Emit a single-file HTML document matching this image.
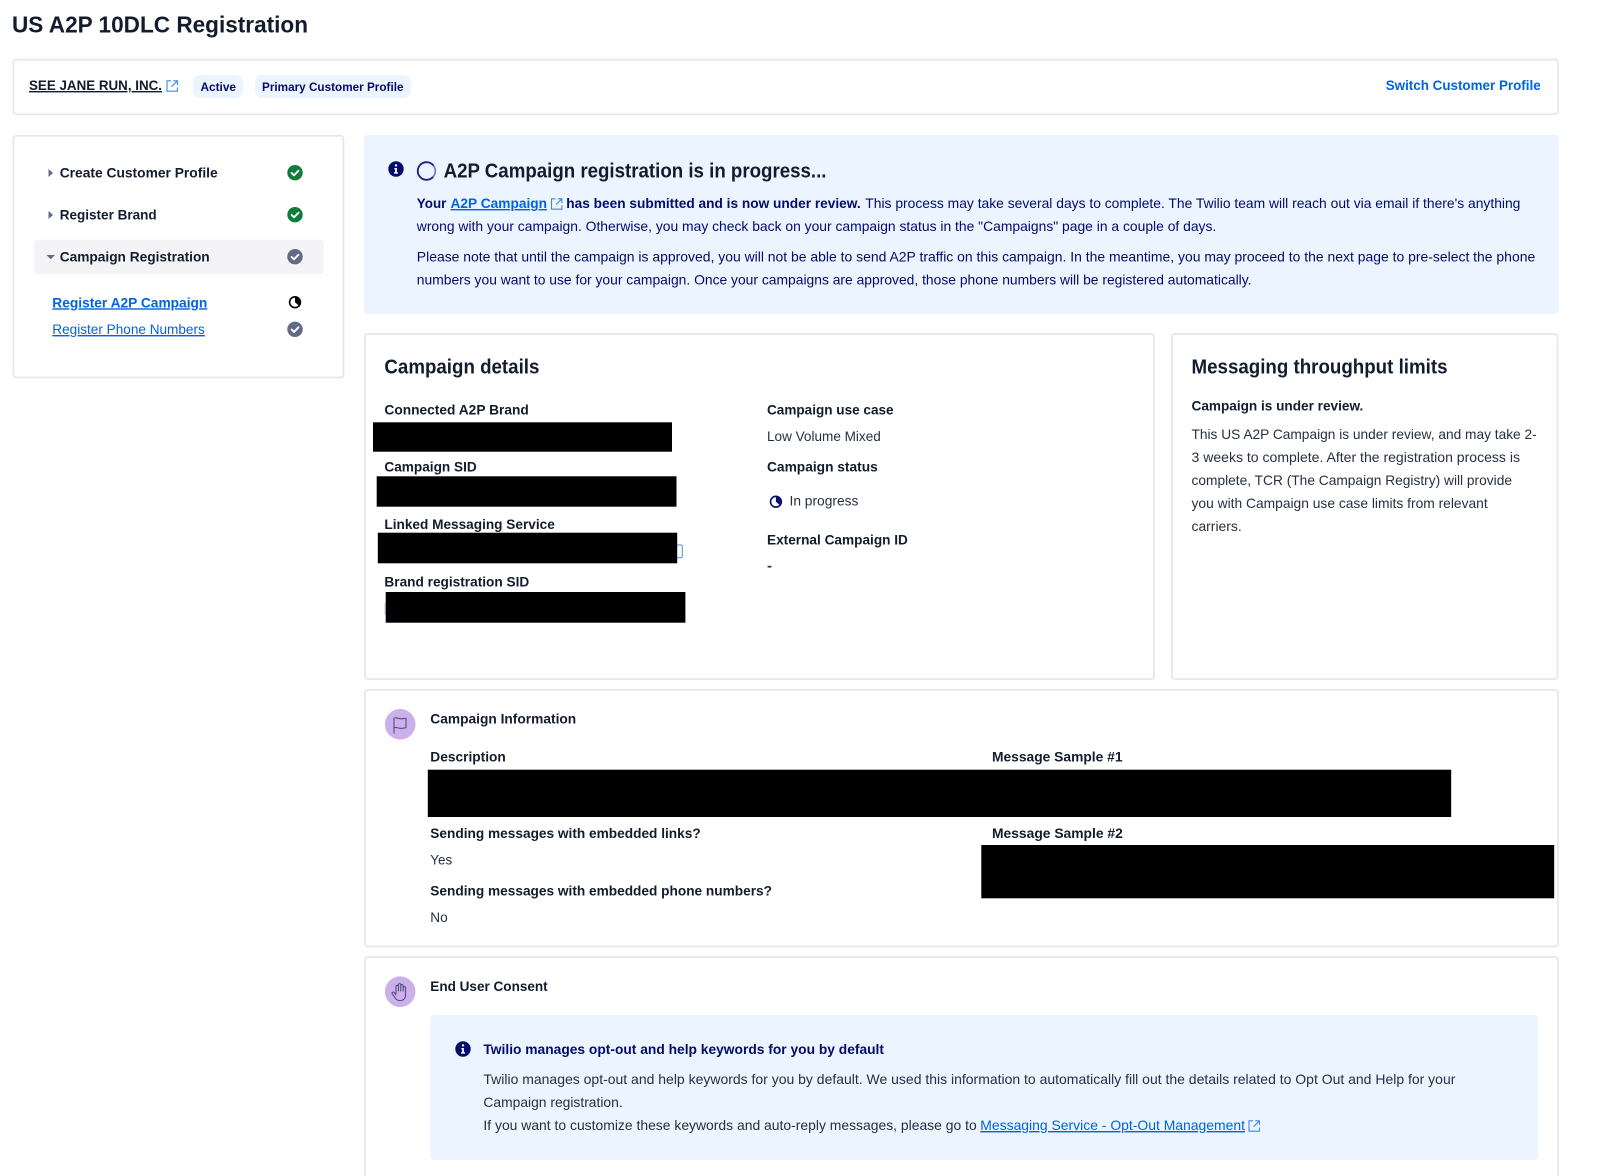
<!DOCTYPE html>
<html lang="en">
<head>
<meta charset="utf-8">
<title>US A2P 10DLC Registration</title>
<style>
html,body{margin:0;padding:0;background:#fff;width:1600px;height:1176px;overflow:hidden}
svg{display:block;filter:blur(.3px)}
text{font-family:"Liberation Sans",Arial,sans-serif;font-size:14px;fill:#121c2d;white-space:pre}
.b{font-weight:700}
.h{font-size:20px;font-weight:700}
.r{fill:#263042}
.n{fill:#030b6b}
.l{fill:#0263e0}
.u{text-decoration:underline}
.s{font-size:12px}
.card{fill:#fff;stroke:#e4e6ec;stroke-width:1.7}
.tint{fill:#ebf4ff}
.ext{fill:none;stroke:#3f86e6;stroke-width:1.1}
.ic{fill:none;stroke:#4f4470;stroke-width:1;stroke-linejoin:round;stroke-linecap:round}
</style>
</head>
<body>
<svg width="1600" height="1176" viewBox="0 0 1600 1176" xmlns="http://www.w3.org/2000/svg">
<defs>
  <g id="ext"><path class="ext" d="M5 .8H1v10.4h10.4V7.5M7.2.8h4.2V5M11.2 1 5.6 6.6"/></g>
  <g id="chk"><path d="M-3.4 .2-1 2.6 3.5-2" fill="none" stroke="#fff" stroke-width="1.9" stroke-linecap="round" stroke-linejoin="round"/></g>
  <g id="inf"><circle r="7.7" fill="#030b6b"/><circle cy="-3.6" r="1.2" fill="#fff"/><path d="M-1.6-1H.9V3.2H2V4.6H-2V3.2H-.9V.4H-1.6Z" fill="#fff"/></g>
</defs>

<text x="12" y="32.7" class="b" style="font-size:23px" textLength="296" lengthAdjust="spacingAndGlyphs">US A2P 10DLC Registration</text>

<!-- Customer profile bar -->
<rect class="card" x="13.4" y="59.6" width="1544.6" height="54.6" rx="3"/>
<text x="29" y="90" class="b u" textLength="133" lengthAdjust="spacingAndGlyphs">SEE JANE RUN, INC.</text>
<use href="#ext" x="166" y="80"/>
<rect class="tint" x="193" y="75" width="50" height="23" rx="7"/>
<text x="200.5" y="91" class="s n" style="font-weight:700" textLength="35.5" lengthAdjust="spacingAndGlyphs">Active</text>
<rect class="tint" x="255" y="75" width="156" height="23" rx="7"/>
<text x="262" y="91" class="s n" style="font-weight:700" textLength="141.5" lengthAdjust="spacingAndGlyphs">Primary Customer Profile</text>
<text x="1385.7" y="90" class="b l" textLength="155" lengthAdjust="spacingAndGlyphs">Switch Customer Profile</text>

<!-- Sidebar -->
<rect class="card" x="13.4" y="135.8" width="330" height="241.7" rx="3"/>
<path d="M48.5 169 53 173 48.5 177Z" fill="#606b85"/>
<text x="59.7" y="177.7" class="b" textLength="158" lengthAdjust="spacingAndGlyphs">Create Customer Profile</text>
<circle cx="295" cy="172.7" r="7.7" fill="#0e7c3a"/><use href="#chk" x="295" y="172.7"/>
<path d="M48.5 211 53 215 48.5 219Z" fill="#606b85"/>
<text x="59.7" y="219.7" class="b" textLength="97" lengthAdjust="spacingAndGlyphs">Register Brand</text>
<circle cx="295" cy="214.7" r="7.7" fill="#0e7c3a"/><use href="#chk" x="295" y="214.7"/>
<rect x="34" y="239.7" width="289.5" height="34.3" rx="4" fill="#f4f4f6"/>
<path d="M46.5 255H55L50.7 259.3Z" fill="#606b85"/>
<text x="59.7" y="261.7" class="b" textLength="150" lengthAdjust="spacingAndGlyphs">Campaign Registration</text>
<circle cx="295" cy="256.7" r="7.7" fill="#606b85"/><use href="#chk" x="295" y="256.7"/>
<text x="52.3" y="307.3" class="b l u" textLength="155" lengthAdjust="spacingAndGlyphs">Register A2P Campaign</text>
<circle cx="295" cy="302.2" r="5.4" fill="#fff" stroke="#000" stroke-width="1.6"/>
<path d="M295 296.8A5.4 5.4 0 0 1 299 305.8L295 302.2Z" fill="#000"/>
<text x="52.3" y="334" class="l u" textLength="152.5" lengthAdjust="spacingAndGlyphs">Register Phone Numbers</text>
<circle cx="295" cy="329.3" r="7.7" fill="#606b85"/><use href="#chk" x="295" y="329.3"/>

<!-- In-progress callout -->
<rect class="tint" x="363.8" y="135" width="1195" height="178.7" rx="4"/>
<use href="#inf" x="396" y="169"/>
<circle cx="426.5" cy="171" r="8.8" fill="none" stroke="#6f7cc4" stroke-width="1.7"/>
<path d="M433.5 165.6A8.8 8.8 0 1 0 433 177" fill="none" stroke="#1d2387" stroke-width="1.8"/>
<text x="443.6" y="177.7" class="h" textLength="382.9" lengthAdjust="spacingAndGlyphs">A2P Campaign registration is in progress...</text>
<text x="416.8" y="208" class="b n" textLength="29.6" lengthAdjust="spacingAndGlyphs">Your</text>
<text x="450.5" y="208" class="b l u" textLength="96.5" lengthAdjust="spacingAndGlyphs">A2P Campaign</text>
<use href="#ext" x="550.5" y="198"/>
<text x="566.3" y="208" class="b n" textLength="294.4" lengthAdjust="spacingAndGlyphs">has been submitted and is now under review.</text>
<text x="865.3" y="208" class="n" textLength="655.1" lengthAdjust="spacingAndGlyphs">This process may take several days to complete. The Twilio team will reach out via email if there's anything</text>
<text x="416.8" y="231" class="n" textLength="799.5" lengthAdjust="spacingAndGlyphs">wrong with your campaign. Otherwise, you may check back on your campaign status in the "Campaigns" page in a couple of days.</text>
<text x="416.8" y="261.7" class="n" textLength="1118.4" lengthAdjust="spacingAndGlyphs">Please note that until the campaign is approved, you will not be able to send A2P traffic on this campaign. In the meantime, you may proceed to the next page to pre-select the phone</text>
<text x="416.8" y="284.7" class="n" textLength="834.7" lengthAdjust="spacingAndGlyphs">numbers you want to use for your campaign. Once your campaigns are approved, those phone numbers will be registered automatically.</text>

<!-- Campaign details -->
<rect class="card" x="365" y="334" width="789" height="345" rx="3"/>
<text x="384.4" y="373.6" class="h" textLength="155" lengthAdjust="spacingAndGlyphs">Campaign details</text>
<text x="384.4" y="414.3" class="b" textLength="144.4" lengthAdjust="spacingAndGlyphs">Connected A2P Brand</text>
<rect x="373" y="422.3" width="299" height="29.4"/>
<text x="384.4" y="471.7" class="b" textLength="92.3" lengthAdjust="spacingAndGlyphs">Campaign SID</text>
<rect x="376.7" y="476.3" width="299.8" height="30.4"/>
<text x="384.4" y="529" class="b" textLength="170.4" lengthAdjust="spacingAndGlyphs">Linked Messaging Service</text>
<rect x="676" y="545" width="6.3" height="12.7" rx="1.5" fill="none" stroke="#4a8fe8" stroke-width="1"/>
<rect x="377.8" y="532.7" width="299.4" height="30.6"/>
<text x="384.4" y="586.3" class="b" textLength="144.9" lengthAdjust="spacingAndGlyphs">Brand registration SID</text>
<path d="M385 603V615" stroke="#b5c9ee" stroke-width="1"/>
<rect x="385.7" y="592" width="299.7" height="30.7"/>
<text x="767" y="414.3" class="b" textLength="126.6" lengthAdjust="spacingAndGlyphs">Campaign use case</text>
<text x="767" y="441" class="r" textLength="113.8" lengthAdjust="spacingAndGlyphs">Low Volume Mixed</text>
<text x="767" y="471.7" class="b" textLength="110.8" lengthAdjust="spacingAndGlyphs">Campaign status</text>
<circle cx="775.9" cy="501.7" r="5.4" fill="#fff" stroke="#030b6b" stroke-width="1.6"/>
<path d="M775.9 496.3A5.4 5.4 0 0 1 779.9 505.3L775.9 501.7Z" fill="#030b6b"/>
<text x="789.5" y="505.7" class="r" textLength="68.9" lengthAdjust="spacingAndGlyphs">In progress</text>
<text x="767" y="544.3" class="b" textLength="140.9" lengthAdjust="spacingAndGlyphs">External Campaign ID</text>
<text x="767" y="570.5" class="r b" textLength="5" lengthAdjust="spacingAndGlyphs">-</text>

<!-- Messaging throughput limits -->
<rect class="card" x="1171.8" y="334" width="385.7" height="345" rx="3"/>
<text x="1191.5" y="373.6" class="h" textLength="256" lengthAdjust="spacingAndGlyphs">Messaging throughput limits</text>
<text x="1191.5" y="410.7" class="b" textLength="171.8" lengthAdjust="spacingAndGlyphs">Campaign is under review.</text>
<text x="1191.5" y="439" class="r" textLength="345.2" lengthAdjust="spacingAndGlyphs">This US A2P Campaign is under review, and may take 2-</text>
<text x="1191.5" y="462" class="r" textLength="328.5" lengthAdjust="spacingAndGlyphs">3 weeks to complete. After the registration process is</text>
<text x="1191.5" y="485" class="r" textLength="320.5" lengthAdjust="spacingAndGlyphs">complete, TCR (The Campaign Registry) will provide</text>
<text x="1191.5" y="507.8" class="r" textLength="296.2" lengthAdjust="spacingAndGlyphs">you with Campaign use case limits from relevant</text>
<text x="1191.5" y="530.8" class="r" textLength="50.2" lengthAdjust="spacingAndGlyphs">carriers.</text>

<!-- Campaign information -->
<rect class="card" x="365" y="689.8" width="1193" height="256.7" rx="3"/>
<circle cx="400.2" cy="724.3" r="15.3" fill="#cbb0ec"/>
<path class="ic" d="M394 733V718.3c2.5-1.4 5 .9 7.5.6l4.5-.7v9.5l-4.5.7c-2.5.3-5-1.8-7.5-.6"/>
<text x="430.3" y="723.3" class="b" textLength="145.9" lengthAdjust="spacingAndGlyphs">Campaign Information</text>
<text x="430.3" y="761.7" class="b" textLength="75.5" lengthAdjust="spacingAndGlyphs">Description</text>
<text x="992" y="761.7" class="b" textLength="130.5" lengthAdjust="spacingAndGlyphs">Message Sample #1</text>
<rect x="427.8" y="769.7" width="1023.4" height="47.3"/>
<text x="430.3" y="838" class="b" textLength="270.4" lengthAdjust="spacingAndGlyphs">Sending messages with embedded links?</text>
<text x="992" y="838" class="b" textLength="130.8" lengthAdjust="spacingAndGlyphs">Message Sample #2</text>
<rect x="981.3" y="845" width="572.9" height="53.3"/>
<text x="430.3" y="864.7" class="r" textLength="21.9" lengthAdjust="spacingAndGlyphs">Yes</text>
<text x="430.3" y="895.5" class="b" textLength="341.7" lengthAdjust="spacingAndGlyphs">Sending messages with embedded phone numbers?</text>
<text x="430.3" y="922" class="r" textLength="17.4" lengthAdjust="spacingAndGlyphs">No</text>

<!-- End user consent -->
<rect class="card" x="365" y="957" width="1193" height="240" rx="3"/>
<circle cx="400.2" cy="991.7" r="15.3" fill="#cbb0ec"/>
<path class="ic" d="M396 993.5V986.5a1.2 1.2 0 0 1 2.4 0V991M398.4 991V984.8a1.2 1.2 0 0 1 2.4 0V991M400.8 991V985.8a1.2 1.2 0 0 1 2.4 0V991M403.2 991V987.8a1.2 1.2 0 0 1 2.4 0V995c0 3.5-2.5 5.6-5.5 5.6-3 0-4.2-1.5-5.2-3l-2.6-3.6a1.2 1.2 0 0 1 1.9-1.5L396 995"/>
<text x="430.3" y="991" class="b" textLength="117.4" lengthAdjust="spacingAndGlyphs">End User Consent</text>
<rect class="tint" x="430.3" y="1015" width="1107.7" height="145" rx="4"/>
<use href="#inf" x="463" y="1049"/>
<text x="483.4" y="1054" class="b n" textLength="400.6" lengthAdjust="spacingAndGlyphs">Twilio manages opt-out and help keywords for you by default</text>
<text x="483.4" y="1084" class="r" textLength="972" lengthAdjust="spacingAndGlyphs">Twilio manages opt-out and help keywords for you by default. We used this information to automatically fill out the details related to Opt Out and Help for your</text>
<text x="483.4" y="1107" class="r" textLength="139.3" lengthAdjust="spacingAndGlyphs">Campaign registration.</text>
<text x="483.4" y="1130" class="r" textLength="493.3" lengthAdjust="spacingAndGlyphs">If you want to customize these keywords and auto-reply messages, please go to</text>
<text x="980.3" y="1130" class="l u" textLength="264.7" lengthAdjust="spacingAndGlyphs">Messaging Service - Opt-Out Management</text>
<use href="#ext" x="1248" y="1120"/>
</svg>
</body>
</html>
